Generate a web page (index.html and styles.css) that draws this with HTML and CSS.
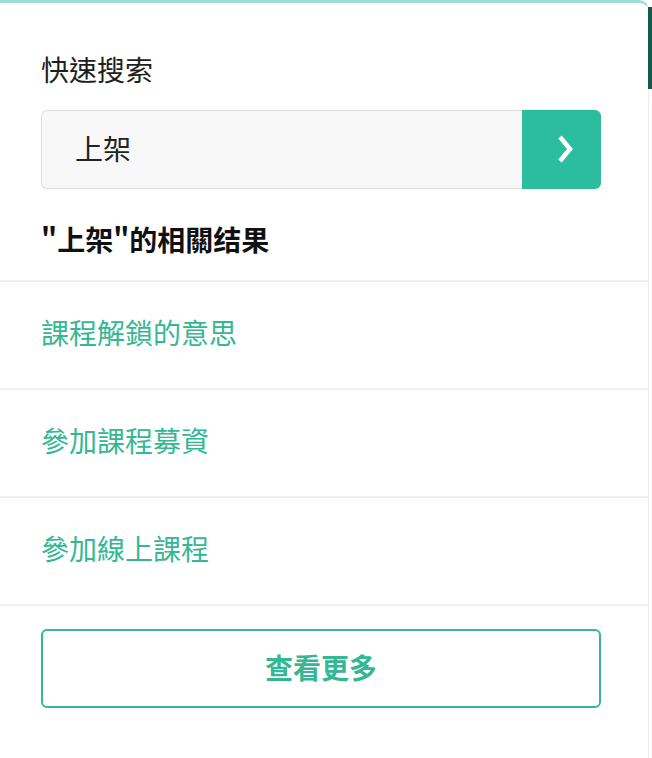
FILE: index.html
```html
<!DOCTYPE html>
<html lang="zh-Hant">
<head>
<meta charset="utf-8">
<link rel="stylesheet" href="styles.css">
</head>
<body>
<div class="panel">
  <div class="inner">
    <div class="title">快速搜索</div>
    <div class="search">
      <div class="search-input">上架</div>
      <button class="search-btn" aria-label="搜索">
        <svg width="18" height="30" viewBox="0 0 18 30"><path d="M4 3 L14 15 L4 27" fill="none" stroke="#fff" stroke-width="4.5" stroke-linecap="butt" stroke-linejoin="miter"/></svg>
      </button>
    </div>
    <div class="heading">"上架"的相關结果</div>
  </div>
  <ul class="results">
    <li class="result">課程解鎖的意思</li>
    <li class="result">參加課程募資</li>
    <li class="result">參加線上課程</li>
  </ul>
  <div class="inner">
    <button class="more">查看更多</button>
  </div>
  <div class="thumb"></div>
</div>
</body>
</html>
```

FILE: styles.css
```css
html, body {
  margin: 0;
  padding: 0;
  background: #ffffff;
}
body {
  width: 652px;
  height: 758px;
  overflow: hidden;
  font-family: "Noto Sans CJK TC", "Noto Sans CJK SC", "Noto Sans", sans-serif;
}
.panel {
  position: relative;
  width: 649px;
  height: 758px;
  box-sizing: border-box;
  border-top: 3px solid #9fdcd1;
  border-right: 1px solid #ececec;
  border-top-right-radius: 10px;
  background: #fff;
}
.thumb {
  position: absolute;
  right: -4px;
  top: 4px;
  width: 4px;
  height: 82px;
  background: #17584e;
}
.inner {
  padding: 0 47px 0 41px;
}
.title {
  padding-top: 46px;
  font-size: 28px;
  line-height: 40px;
  color: #1e1e1e;
}
.search {
  margin-top: 21px;
  display: flex;
  height: 79px;
}
.search-input {
  flex: 1;
  box-sizing: border-box;
  background: #f8f8f8;
  border: 1px solid #dedede;
  border-right: none;
  border-radius: 6px 0 0 6px;
  font-size: 28px;
  color: #222;
  display: flex;
  align-items: center;
  padding-left: 33px;
  padding-bottom: 3px;
}
.search-btn {
  width: 79px;
  border: none;
  padding: 0 0 2px 6px;
  background: #2cbd9e;
  border-radius: 0 6px 6px 0;
  display: flex;
  align-items: center;
  justify-content: center;
}
.heading {
  margin-top: 30px;
  font-size: 28px;
  line-height: 40px;
  font-weight: 700;
  color: #111;
}
.results {
  list-style: none;
  margin: 21px 0 0;
  padding: 0;
  border-bottom: 2px solid #eeeeee;
}
.result {
  border-top: 2px solid #eeeeee;
  height: 100px;
  box-sizing: content-box;
  display: flex;
  align-items: center;
  padding-left: 41px;
  padding-bottom: 6px;
  font-size: 28px;
  line-height: 40px;
  color: #35b793;
}
.more {
  margin-top: 23px;
  width: 100%;
  height: 79px;
  box-sizing: border-box;
  background: #fff;
  border: 2px solid #3ab595;
  border-radius: 6px;
  font-family: inherit;
  font-size: 28px;
  font-weight: 700;
  color: #35b793;
  padding-bottom: 5px;
}
```
